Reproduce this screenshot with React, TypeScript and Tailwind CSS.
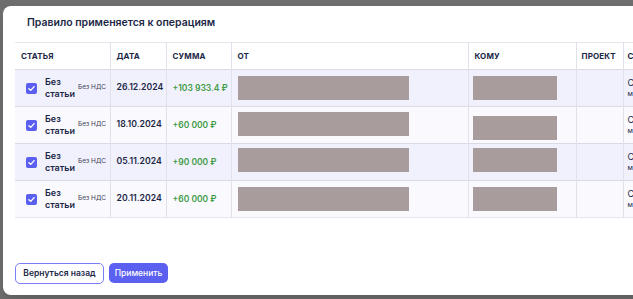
import React from 'react';

const rows = [
  { date: '26.12.2024', sum: '+103 933.4 ₽', from: 6, to: 6 },
  { date: '18.10.2024', sum: '+60 000 ₽', from: 5, to: 9 },
  { date: '05.11.2024', sum: '+90 000 ₽', from: 4, to: 4 },
  { date: '20.11.2024', sum: '+60 000 ₽', from: 6, to: 6 },
];

const Check = () => (
  <span className="flex h-[11px] w-[11px] shrink-0 items-center justify-center rounded-[2px] bg-[#5a5ff0]">
    <svg viewBox="0 0 12 12" className="h-[9px] w-[9px]" fill="none" stroke="white" strokeWidth="1.8" strokeLinecap="round" strokeLinejoin="round">
      <path d="M2.5 6.2 5 8.5 9.5 3.5" />
    </svg>
  </span>
);

export default function App() {
  return (
    <div className="h-[299px] w-[633px] overflow-hidden bg-[#6d6d6d] pl-[3px] pt-[6px]" style={{ fontFamily: 'Inter, "Noto Sans", sans-serif' }}>
      <div className="flex h-[289px] w-[720px] flex-col rounded-l-[8px] bg-white pl-[12px] shadow-lg">
        <h2 className="pl-[12px] pt-[9px] text-[10.5px] font-semibold leading-[16px] text-[#1c2746]">
          Правило применяется к операциям
        </h2>
        <table className="mt-[11px] w-[705px] table-fixed border-collapse text-[#1c2746]">
          <colgroup>
            <col className="w-[95px]" />
            <col className="w-[56px]" />
            <col className="w-[65px]" />
            <col className="w-[237px]" />
            <col className="w-[108px]" />
            <col className="w-[47px]" />
            <col className="w-[97px]" />
          </colgroup>
          <thead>
            <tr className="h-[27px] border-t border-[#e6e7ee] text-left text-[8px] font-bold tracking-[0.02em]">
              <th className="pl-[6px] font-bold">СТАТЬЯ</th>
              <th className="border-l border-[#e0e1ea] pl-[6px] font-bold">ДАТА</th>
              <th className="border-l border-[#e0e1ea] pl-[6px] font-bold">СУММА</th>
              <th className="border-l border-[#e0e1ea] pl-[6px] font-bold">ОТ</th>
              <th className="border-l border-[#e0e1ea] pl-[6px] font-bold">КОМУ</th>
              <th className="border-l border-[#e0e1ea] pl-[5px] font-bold">ПРОЕКТ</th>
              <th className="border-l border-[#e0e1ea] pl-[4px] font-bold">С</th>
            </tr>
          </thead>
          <tbody>
            {rows.map((r, i) => (
              <tr
                key={i}
                className={`h-[37px] border-t border-[#d9dae6] ${i === rows.length - 1 ? 'border-b border-b-[#e6e7ee]' : ''} ${i % 2 === 0 ? 'bg-[#f1f1fd]' : 'bg-[#f9f9fe]'}`}
              >
                <td className="p-0 pl-[11px]">
                  <div className="flex items-center">
                    <Check />
                    <span className="ml-[8px] text-[9px] font-semibold leading-[12px]">
                      Без
                      <br />
                      статьи
                    </span>
                    <span className="ml-[3px] whitespace-nowrap text-[6.5px] text-[#3a4055]">Без НДС</span>
                  </div>
                </td>
                <td className="whitespace-nowrap border-l border-[#e0e1ea] pl-[6px] text-[8.7px] font-semibold">{r.date}</td>
                <td className="whitespace-nowrap border-l border-[#e0e1ea] pl-[6px] text-[8.5px] font-semibold text-[#3f9b45]">{r.sum}</td>
                <td className="relative border-l border-[#e0e1ea] p-0">
                  <div className="absolute left-[6px] h-[24px] w-[171px] bg-[#a89c9c]" style={{ top: r.from }} />
                </td>
                <td className="relative border-l border-[#e0e1ea] p-0">
                  <div className="absolute left-[4px] h-[24px] w-[84px] bg-[#a89c9c]" style={{ top: r.to }} />
                </td>
                <td className="border-l border-[#e0e1ea]" />
                <td className="border-l border-[#e0e1ea] pl-[4px] align-middle">
                  <div className="text-[9px] leading-[12px]">С</div>
                  <div className="text-[7px] leading-[10px]">м</div>
                </td>
              </tr>
            ))}
          </tbody>
        </table>
        <div className="mt-auto flex gap-[5px] pb-[11px]">
          <button className="h-[21px] w-[89px] rounded-[5px] border border-[#7a7ef5] bg-white text-[8.5px] font-semibold text-[#1c2746]">
            Вернуться назад
          </button>
          <button className="h-[20px] w-[59px] rounded-[5px] bg-[#5b60f1] text-[8.5px] font-medium text-white">
            Применить
          </button>
        </div>
      </div>
    </div>
  );
}
